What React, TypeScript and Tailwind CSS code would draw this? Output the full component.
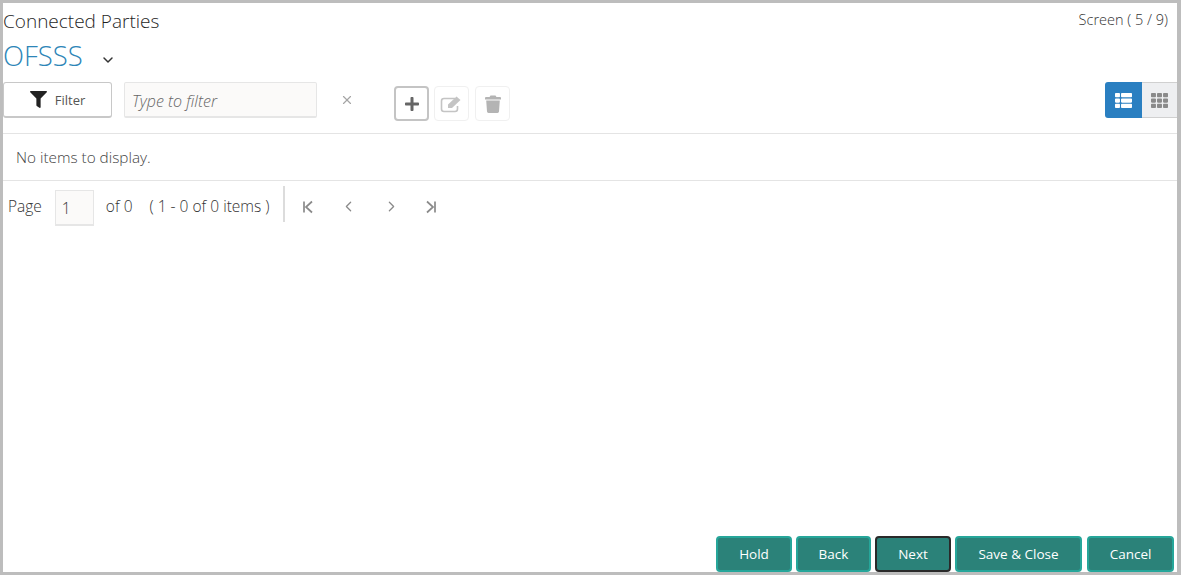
import { ChevronDown, ChevronLeft, ChevronRight, X } from "lucide-react";
import { FaFilter, FaPlus, FaTh, FaThList } from "react-icons/fa";
import clsx from "clsx";

const ACTIONS = [
    { label: "Hold", width: "w-[76px]" },
    { label: "Back", width: "w-[75px]" },
    { label: "Next", width: "w-[76px]", focused: true },
    { label: "Save & Close", width: "w-[127px]" },
    { label: "Cancel", width: "w-[87px] ml-px" },
];

export default function App() {
    return (
        <div className="h-[575px] w-[1181px] overflow-hidden border-t-[3px] border-r-[4px] border-b-[3px] border-l-[3px] border-[#bdbdbd] bg-white font-['Open_Sans',sans-serif] font-light text-[#3c3c3c] flex flex-col">
            {/* Header */}
            <div className="flex items-start justify-between pr-[9px]">
                <h1 className="text-[19px] leading-[25px] mt-[6px] text-[#1f1f1f]">Connected Parties</h1>
                <span className="text-[14.5px] leading-[18px] mt-[8px] text-[#333]">Screen ( 5 / 9)</span>
            </div>
            <div className="flex items-center h-[38px] mt-[3px]">
                <span className="text-[27.5px] font-light leading-[38px] text-[#2d86b8]">OFSSS</span>
                <ChevronDown size={16} strokeWidth={2.2} className="ml-[17px] mt-[7px] text-[#333]" />
            </div>

            {/* Toolbar */}
            <div className="flex items-start h-[54px] mt-[5px] pt-[2px] border-b border-[#e4e4e4]">
                <button className="w-[109px] h-[36px] rounded-[3px] border border-[#c8c8c8] border-b-2 bg-white flex items-center justify-center gap-[8px] pt-[2px] text-[13px] font-normal text-[#555]">
                    <FaFilter size={17} className="text-[#222] -mt-[2px]" />
                    Filter
                </button>
                <div className="ml-[12px] w-[193px] h-[36px] rounded-[2px] border border-[#e6e6e6] border-b-2 bg-[#fbfaf9] pl-[7px] pt-[3px] flex items-center text-[16px] italic font-light text-[#666]">
                    Type to filter
                </div>
                <X size={14} strokeWidth={2} className="ml-[23px] mt-[11px] text-[#a5a5a5]" />
                <button className="ml-[40px] mt-[4px] w-[35px] h-[35px] rounded-[4px] border-2 border-[#c4c4c4] bg-white flex items-center justify-center">
                    <FaPlus size={16} className="text-[#666]" />
                </button>
                <button className="ml-[5px] mt-[4px] w-[35px] h-[35px] rounded-[4px] border border-[#f0f0f0] bg-white flex items-center justify-center">
                    <svg width="23" height="18" viewBox="0 0 23 18" fill="none">
                        <path d="M15 3.5H4a2.5 2.5 0 0 0-2.5 2.5v8A2.5 2.5 0 0 0 4 16.5h11a2.5 2.5 0 0 0 2.5-2.5v-3" stroke="#c4c4c4" strokeWidth="1.6" />
                        <path d="M8 9.5 16.5 1.5 20.5 5 12 13H8z" fill="#c4c4c4" />
                    </svg>
                </button>
                <button className="ml-[6px] mt-[4px] w-[35px] h-[35px] rounded-[4px] border border-[#f0f0f0] bg-white flex items-center justify-center">
                    <svg width="16" height="18" viewBox="0 0 16 18" fill="#b4b4b4">
                        <path d="M5.5 0.5h5l1 1.5H15a1 1 0 0 1 1 1V4.5H0V3a1 1 0 0 1 1-1h3.5z" />
                        <path d="M1.2 5.5h13.6l-.8 11a1.5 1.5 0 0 1-1.5 1.4H3.5A1.5 1.5 0 0 1 2 16.5z" />
                    </svg>
                </button>
                <div className="ml-auto flex">
                    <button className="w-[37px] h-[36px] rounded-l-[3px] bg-[#2a7fc1] flex items-center justify-center">
                        <FaThList size={17} className="text-white" />
                    </button>
                    <button className="w-[35px] h-[36px] bg-[#eeeff1] border-t border-b border-[#d0d0d0] flex items-center justify-center">
                        <FaTh size={17} className="text-[#8a8a8a]" />
                    </button>
                </div>
            </div>

            {/* Empty table */}
            <div className="h-[47px] flex items-center pl-[13px] pt-px border-b border-[#e4e4e4] text-[15.3px] text-[#444]">
                No items to display.
            </div>

            {/* Pager */}
            <div className="flex items-start h-[45px] text-[15.5px] text-[#333]">
                <span className="ml-[5px] mt-[15px] leading-[20px]">Page</span>
                <div className="ml-[13px] mt-[9px] w-[39px] h-[36px] border border-[#e6e6e6] border-b-2 bg-[#fbfaf9] flex items-center pl-[6px] pt-[3px]">
                    1
                </div>
                <span className="ml-[12px] mt-[15px] leading-[20px]">of 0</span>
                <span className="ml-[17px] mt-[15px] leading-[20px]">( 1 - 0 of 0 items )</span>
                <div className="ml-[13px] mt-[5px] w-[2px] h-[36px] bg-[#dcdcdc]" />
                <div className="mt-[17px] ml-[16px] flex items-center text-[#8a8a8a]">
                    <svg width="14" height="14" viewBox="0 0 14 14" fill="none" stroke="currentColor" strokeWidth="1.7">
                        <path d="M3 1.5v11M11 1.5 5 7l6 5.5" />
                    </svg>
                    <ChevronLeft size={17} strokeWidth={1.8} className="ml-[25px]" />
                    <ChevronRight size={17} strokeWidth={1.8} className="ml-[26px]" />
                    <svg width="14" height="14" viewBox="0 0 14 14" fill="none" stroke="currentColor" strokeWidth="1.7" className="ml-[24px]">
                        <path d="M11 1.5v11M3 1.5 9 7l-6 5.5" />
                    </svg>
                </div>
            </div>

            {/* Footer actions */}
            <div className="mt-auto flex justify-end gap-[4px] pr-[3px]">
                {ACTIONS.map((a) => (
                    <button
                        key={a.label}
                        className={clsx(
                            "h-[36px] rounded-[4px] border-2 bg-[#2b8279] pt-px text-[13.5px] font-normal text-white",
                            a.width,
                            a.focused ? "border-[#2a2a2a]" : "border-[#26a69a]",
                        )}
                    >
                        {a.label}
                    </button>
                ))}
            </div>
        </div>
    );
}
